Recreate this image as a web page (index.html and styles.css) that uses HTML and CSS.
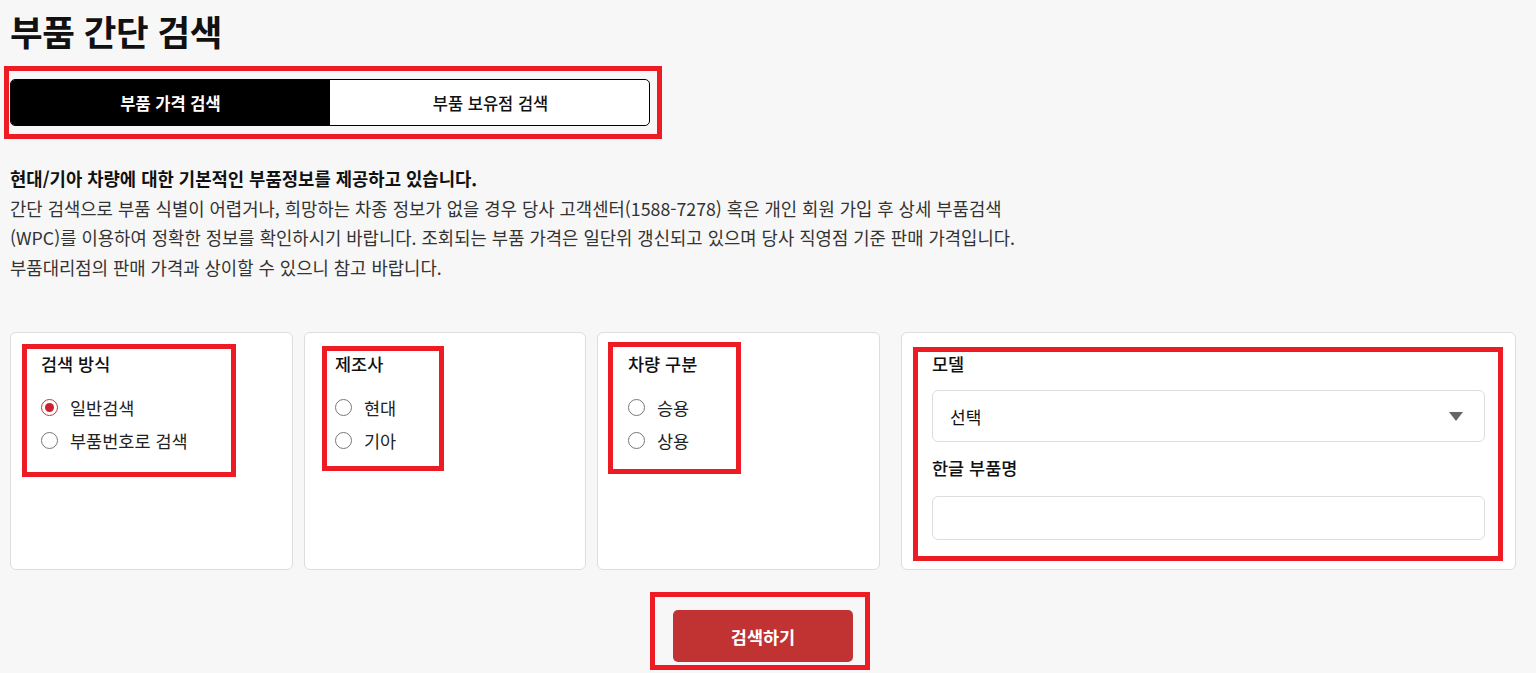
FILE: index.html
```html
<!DOCTYPE html>
<html lang="ko">

<head>
	<meta charset="utf-8">
	<meta name="viewport" content="width=device-width, initial-scale=1.0">
	<title>부품 간단 검색</title>
	<link rel="stylesheet" href="styles.css">
</head>

<body>
	<div class="parts-search">

		<h1>부품 간단 검색</h1>

		<div class="tabs">
			<button class="tab active">부품 가격 검색</button>
			<button class="tab">부품 보유점 검색</button>
			<span class="mark mark-tabs"></span>
		</div>

		<div class="intro">
			<strong>현대/기아 차량에 대한 기본적인 부품정보를 제공하고 있습니다.</strong><br>
			간단 검색으로 부품 식별이 어렵거나, 희망하는 차종 정보가 없을 경우 당사 고객센터(1588-7278) 혹은 개인 회원 가입 후 상세 부품검색<br>
			(WPC)를 이용하여 정확한 정보를 확인하시기 바랍니다. 조회되는 부품 가격은 일단위 갱신되고 있으며 당사 직영점 기준 판매 가격입니다.<br>
			부품대리점의 판매 가격과 상이할 수 있으니 참고 바랍니다.
		</div>

		<div class="cards">

			<div class="card">
				<div class="card-title">검색 방식</div>
				<label class="radio-row"><span class="radio checked"></span>일반검색</label>
				<label class="radio-row"><span class="radio"></span>부품번호로 검색</label>
				<span class="mark mark-c1"></span>
			</div>

			<div class="card">
				<div class="card-title">제조사</div>
				<label class="radio-row"><span class="radio"></span>현대</label>
				<label class="radio-row"><span class="radio"></span>기아</label>
				<span class="mark mark-c2"></span>
			</div>

			<div class="card">
				<div class="card-title">차량 구분</div>
				<label class="radio-row"><span class="radio"></span>승용</label>
				<label class="radio-row"><span class="radio"></span>상용</label>
				<span class="mark mark-c3"></span>
			</div>

			<div class="card card-wide">
				<div class="card-title">모델</div>
				<div class="select">
					<span>선택</span>
					<svg width="14" height="9" viewBox="0 0 14 9"><path d="M0 0H14L7 9Z" fill="#666"/></svg>
				</div>
				<div class="card-title second">한글 부품명</div>
				<div class="text-input"></div>
				<span class="mark mark-c4"></span>
			</div>

		</div>

		<div class="knap">
			<div class="knap-wrap">
				<button class="search-btn">검색하기</button>
				<span class="mark mark-btn"></span>
			</div>
		</div>

	</div>
</body>

</html>
```

FILE: styles.css
```css
* {
	box-sizing: border-box;
}

body {
	margin: 0;
	background: #f7f7f7;
	font-family: "Noto Sans CJK KR", "Noto Sans", sans-serif;
	color: #111;
}

.parts-search {
	padding: 0 20px 11px 10px;
}

h1 {
	font-size: 35.5px;
	line-height: 40px;
	font-weight: 700;
	margin: 11px 0 0;
	letter-spacing: -0.5px;
}

/*		Faner		*/

.tabs {
	position: relative;
	display: grid;
	grid-template-columns: 319px 321px;
	width: 640px;
	height: 47px;
	margin: 28px 0 0;
	border: 1px solid #000;
	border-radius: 5px;
	background: #fff;
}

.tab {
	font-family: inherit;
	font-size: 16.5px;
	font-weight: 500;
	border: none;
	background: transparent;
	color: #111;
	padding: 0;
}

.tab.active {
	background: #000;
	color: #fff;
	font-weight: 700;
	border-radius: 4px 0 0 4px;
}

/*		Tekst		*/

.intro {
	margin: 38px 0 0;
	font-size: 17.75px;
	line-height: 29.5px;
	color: #333;
}

.intro strong {
	color: #111;
	font-weight: 700;
}

/*		Kort		*/

.cards {
	display: grid;
	grid-template-columns: 283px 282px 283px 1fr;
	column-gap: 11px;
	margin: 50px 0 0;
}

.card {
	position: relative;
	height: 238px;
	background: #fff;
	border: 1px solid #ddd;
	border-radius: 6px;
	padding: 19px 30px 0 30px;
}

.card-wide {
	margin-left: 10px;
}

.card-title {
	font-size: 17.5px;
	font-weight: 500;
	line-height: 24px;
	margin: 0 0 15px;
}

.card-title.second {
	margin: 14px 0 16px;
}

.radio-row {
	display: flex;
	align-items: center;
	gap: 12px;
	height: 33px;
	font-size: 17.5px;
	color: #222;
}

.radio {
	width: 17px;
	height: 17px;
	border: 1px solid #777;
	border-radius: 50%;
	display: flex;
	align-items: center;
	justify-content: center;
	background: #fff;
}

.radio.checked {
	border-color: #c8323a;
}

.radio.checked::after {
	content: "";
	width: 9px;
	height: 9px;
	border-radius: 50%;
	background: #cc1f2f;
}

.select {
	display: flex;
	align-items: center;
	justify-content: space-between;
	height: 52px;
	margin: -1px 0 0;
	padding: 0 21px 0 17px;
	border: 1px solid #ddd;
	border-radius: 6px;
	font-size: 17px;
	background: #fff;
}

.text-input {
	height: 44px;
	border: 1px solid #ddd;
	border-radius: 6px;
	background: #fff;
}

/*		Knap		*/

.knap {
	display: flex;
	justify-content: center;
	margin: 40px 0 0;
}

.knap-wrap {
	position: relative;
}

.search-btn {
	display: block;
	width: 180px;
	height: 52px;
	border: none;
	border-radius: 5px;
	background: #c13232;
	color: #fff;
	font-family: inherit;
	font-size: 17.5px;
	font-weight: 700;
}

/*		Røde markeringer		*/

.mark {
	position: absolute;
	border: 5px solid #ed1c24;
	pointer-events: none;
}

.mark-tabs {
	left: -7px;
	top: -14px;
	width: 658px;
	height: 73px;
}

.mark-c1 {
	left: 11px;
	top: 11px;
	width: 214px;
	height: 133px;
}

.mark-c2 {
	left: 17px;
	top: 13px;
	width: 122px;
	height: 125px;
}

.mark-c3 {
	left: 10px;
	top: 9px;
	width: 133px;
	height: 132px;
}

.mark-c4 {
	left: 11px;
	top: 14px;
	width: 590px;
	height: 214px;
}

.mark-btn {
	left: -23px;
	top: -18px;
	width: 220px;
	height: 78px;
}
```
